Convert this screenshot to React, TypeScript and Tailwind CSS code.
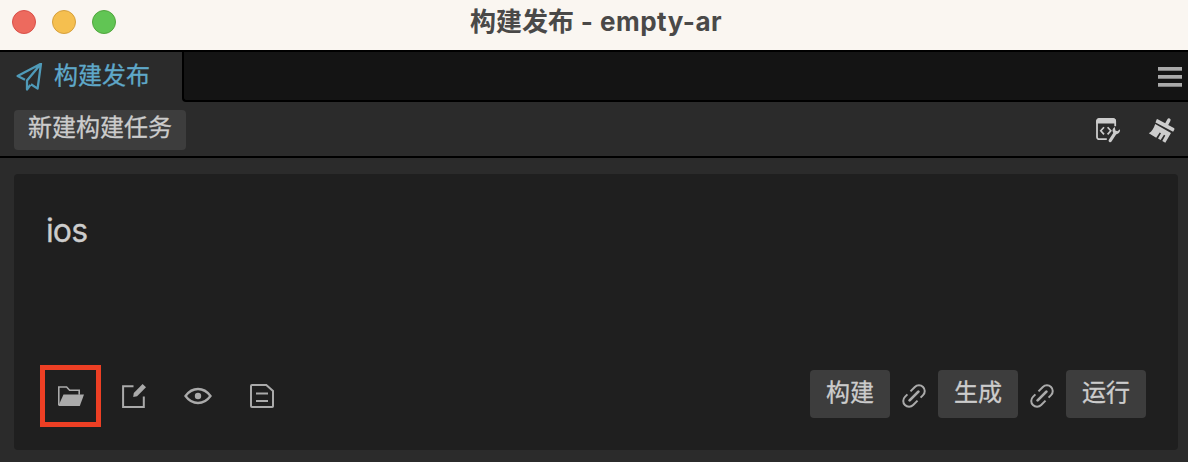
import React from "react";

const cjk = "font-['Inter','Noto_Sans_CJK_SC',sans-serif]";

function PlaneIcon() {
  return (
    <svg className="h-7 w-7 shrink-0" viewBox="16 63 28 28" fill="none" stroke="#4f9ab8" strokeWidth="2.3" strokeLinejoin="round">
      <path d="M25 79.8 17.6 76 41 63.7 37.6 88.6 31 84.2M41 63.7 27 80.5V89.5l3.4-4.6" />
    </svg>
  );
}

function BuildToolIcon() {
  return (
    <svg className="h-[26px] w-[26px]" viewBox="0 0 26 26" fill="none" stroke="#cccccc">
      <path d="M11.8 22.2H4.2A2.2 2.2 0 0 1 2 20V4.2A2.2 2.2 0 0 1 4.2 2H18a2.2 2.2 0 0 1 2.2 2.2v5" strokeWidth="1.8" />
      <path d="M1.2 6.4V4A3 3 0 0 1 4 1.2h14A3 3 0 0 1 21 4v2.4z" fill="#cccccc" stroke="none" />
      <path d="M9 10.2 5.8 13.8 9 17.4M12.6 10.2l3.2 3.6-3.2 3.6" strokeWidth="1.7" />
      <path d="m15.2 23.6 5.2-8" strokeWidth="3.2" strokeLinecap="round" />
      <path d="M19.8 10.1c-2 1-2.9 3.4-1.9 5.2 1.1 2 3.5 2.4 5.2 1.3 1.5-1 2.2-2.6 1.9-4.3l-2.6 2-2-.9-.3-2z" fill="#cccccc" stroke="none" />
    </svg>
  );
}

function BrushIcon() {
  return (
    <svg className="h-7 w-7" viewBox="0 0 28 28" fill="#cccccc">
      <path d="m9.2 3.1 8 4.2 2.2-4.1a1.7 1.7 0 0 1 3 1.7l-2.2 4 5.7 3.2a1.2 1.2 0 0 1 .4 1.6l-1.2 2.1L7.5 6.4l1.1-2.9z" />
      <path d="M7.2 7.9 23 17l-5.7 9.8-3-1.7 3-5.6-1.3-.8-3.4 5.4-2.6-1.5 3-5.4-1.3-.8-3.5 5.4-7.4-4.5c3.2-2.1 5-5.1 6.4-9.4z" />
    </svg>
  );
}

function FolderIcon() {
  return (
    <svg className="h-7 w-7" viewBox="0 0 28 28" fill="#aaaaaa">
      <path d="M1.8 23V5h7.8l3 3.2h9.6v4.6" fill="none" stroke="#aaaaaa" strokeWidth="1.6" />
      <path d="M6.5 12.6H27l-4.2 11.5H1.3z" />
    </svg>
  );
}

function EditIcon() {
  return (
    <svg className="h-7 w-7" viewBox="0 0 28 28" fill="none" stroke="#aaaaaa">
      <path d="M13.5 4.3H3.1v20.6h20.7V14.5" strokeWidth="2" />
      <path d="m13.2 15.1.6-4.2 8.8-8.8L26 5.2l-8.9 9.1z" fill="#aaaaaa" stroke="none" />
    </svg>
  );
}

function EyeIcon() {
  return (
    <svg className="h-7 w-7" viewBox="0 0 28 28" fill="none" stroke="#aaaaaa">
      <path d="M1.5 14Q6.6 7 14 7t12.5 7Q21.4 21 14 21T1.5 14Z" strokeWidth="2.3" />
      <circle cx="14" cy="14" r="3.2" fill="#aaaaaa" stroke="none" />
    </svg>
  );
}

function LogIcon() {
  return (
    <svg className="h-7 w-7" viewBox="0 0 28 28" fill="none" stroke="#aaaaaa" strokeWidth="2">
      <path d="M4 3h14.3l6.7 6v15.2a.8.8 0 0 1-.8.8H4a1 1 0 0 1-1-1V4a1 1 0 0 1 1-1Z" />
      <path d="M8 11.5h12M8 19h12" />
    </svg>
  );
}

function LinkIcon() {
  return (
    <svg className="h-12 w-12 pt-1" viewBox="0 0 48 44" fill="none" stroke="#aaaaaa" strokeWidth="2">
      <g transform="rotate(-45 24 22)">
        <path d="M20.5 16.2H17a5.8 5.8 0 0 0 0 11.6h6.2M27.5 27.8H31a5.8 5.8 0 0 0 0-11.6h-6.2" />
        <path d="M17.8 22h12.4" strokeWidth="2.8" strokeLinecap="round" />
      </g>
    </svg>
  );
}

function Action({ children }: { children: React.ReactNode }) {
  return (
    <button className="flex h-12 w-20 items-center justify-center rounded bg-[#3d3d3d] pb-[3px] text-2xl leading-none text-[#cccccc] [-webkit-text-stroke:0.3px]">
      {children}
    </button>
  );
}

export default function App() {
  return (
    <div className={`flex h-[462px] w-[1188px] flex-col overflow-hidden bg-[#2b2b2b] text-[#cccccc] ${cjk}`}>
      <header className="flex h-[52px] shrink-0 items-center border-b-2 border-black bg-[#faf6f1] pb-[7px]">
        <div className="flex gap-4 pl-3">
          <span className="h-6 w-6 rounded-full border border-[#d95049] bg-[#ed6a5e]" />
          <span className="h-6 w-6 rounded-full border border-[#d6a03d] bg-[#f5bf4f]" />
          <span className="h-6 w-6 rounded-full border border-[#51a63e] bg-[#61c554]" />
        </div>
        <h1 className="ml-[354px] whitespace-pre text-[26px] leading-none font-bold text-[#4a4948]">
          构建发布<span className="tracking-[0.5px]"> - empty-ar</span>
        </h1>
      </header>

      <nav className="flex h-[50px] shrink-0">
        <div className="flex w-[182px] items-center gap-2.5 pl-4 text-2xl leading-none text-[#5fa8c9]">
          <PlaneIcon />
          <span className="pb-0.5 [-webkit-text-stroke:0.3px]">构建发布</span>
        </div>
        <div className="flex flex-1 items-center justify-end rounded-bl border-b-2 border-l-2 border-black bg-[#141414] pr-1.5">
          <div className="flex flex-col gap-1 pt-0.5">
            <span className="h-1 w-6 border-b border-[#808080] bg-[#aaaaaa]" />
            <span className="h-1 w-6 border-b border-[#808080] bg-[#aaaaaa]" />
            <span className="h-1 w-6 border-b border-[#808080] bg-[#aaaaaa]" />
          </div>
        </div>
      </nav>

      <div className="flex h-14 shrink-0 items-center justify-between border-b-2 border-black pt-0.5 pr-3 pl-3.5">
        <button className="flex h-10 w-[172px] items-center justify-center rounded bg-[#3d3d3d] pb-1 text-2xl leading-none [-webkit-text-stroke:0.3px]">
          新建构建任务
        </button>
        <div className="flex items-center gap-[27px]">
          <BuildToolIcon />
          <BrushIcon />
        </div>
      </div>

      <main className="flex flex-1 pt-4 pr-2.5 pb-3 pl-3.5">
        <section className="flex flex-1 flex-col justify-between rounded bg-[#1f1f1f] pr-8 pb-[23px] pl-[26px]">
          <h2 className="pt-10 pl-1.5 text-[32px] leading-[34px] tracking-[-0.9px] [-webkit-text-stroke:0.3px]">ios</h2>
          <div className="flex items-center justify-between">
            <div className="flex items-center">
              <div className="flex h-[62px] w-[61px] items-center justify-center border-[5px] border-[#ed3f24]">
                <FolderIcon />
              </div>
              <div className="flex gap-9 pl-[19px]">
                <EditIcon />
                <EyeIcon />
                <LogIcon />
              </div>
            </div>
            <div className="flex pb-1">
              <Action>构建</Action>
              <LinkIcon />
              <Action>生成</Action>
              <LinkIcon />
              <Action>运行</Action>
            </div>
          </div>
        </section>
      </main>
    </div>
  );
}
